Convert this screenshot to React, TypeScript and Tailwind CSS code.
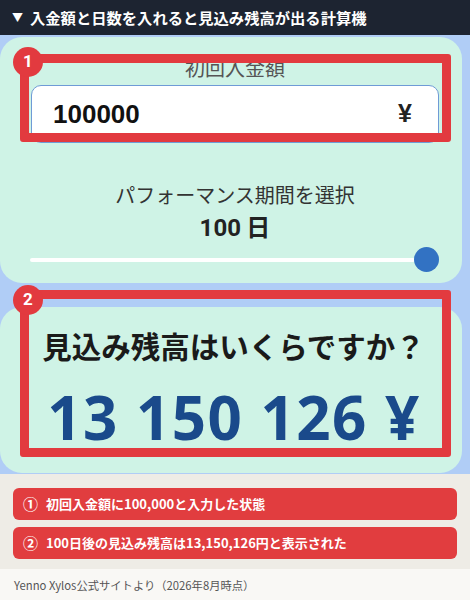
const jp = "font-['Noto_Sans_CJK_JP','Noto_Sans',sans-serif]";

function Badge({n, className}: {n: string, className: string}) {
    return (
        <div className={"absolute w-[30px] h-[30px] rounded-full bg-[#e23a3f] flex items-center justify-center text-white text-[17px] font-bold font-['Roboto',sans-serif] " + className}>
            {n}
        </div>
    );
}

export default function App() {
    return (
        <div className={"w-[470px] h-[600px] overflow-hidden bg-white " + jp}>
            <div className="h-[35px] bg-[#1d2431] flex items-center px-[12px] gap-[7px] text-white">
                <span className="text-[11px] leading-none">▼</span>
                <span className="text-[15.3px] font-bold leading-none">入金額と日数を入れると見込み残高が出る計算機</span>
            </div>

            <div className="relative bg-[#b0cdf6] pt-[2px] pb-[1px] pr-[8px]">
                <div className="w-[462px] h-[246px] bg-[#cff3e6] rounded-[22px] flex flex-col items-center pt-[18px] pl-[31px] pr-[23px]">
                    <div className="text-[20px] leading-[26px] text-[#555]">初回入金額</div>
                    <div className="mt-[4px] w-[408px] h-[58px] bg-white border-[1.5px] border-[#6f9bd6] rounded-[10px] flex items-center justify-between pl-[21px] pr-[26px]">
                        <span className="text-[26px] font-bold text-[#111] font-['Liberation_Sans',sans-serif]">100000</span>
                        <span className="text-[25px] font-bold text-[#222] font-['Liberation_Sans',sans-serif]">¥</span>
                    </div>
                    <div className="mt-[38px] text-[20px] leading-[28px] text-[#333]">パフォーマンス期間を選択</div>
                    <div className="mt-[2px] text-[24px] leading-[30px] font-bold text-[#222]">
                        <span className="font-['Roboto',sans-serif]">100</span> 日
                    </div>
                    <div className="mt-[4px] w-[409px] h-[25px] flex items-center -ml-[1px]">
                        <div className="flex-1 h-[4px] bg-white rounded-full"></div>
                        <div className="w-[25px] h-[25px] rounded-full bg-[#3272c3] -ml-[1px]"></div>
                    </div>
                </div>

                <div className="mt-[24px] w-[462px] h-[166px] bg-[#cff3e6] rounded-[22px] flex flex-col items-center pt-[18px]">
                    <div className="text-[29.5px] leading-[40px] font-bold text-[#1a1a1a] pl-[5px]">見込み残高はいくらですか？</div>
                    <div className="mt-[20px] text-[60px] leading-[64px] font-bold tracking-[1.5px] text-[#1a4a8b] font-['Open_Sans',sans-serif] pl-[6px]">13 150 126 ¥</div>
                </div>

                <div className="absolute left-[20px] top-[19px] w-[431px] h-[88px] border-[9px] border-[#e23a3f] rounded-[3px]"></div>
                <Badge n="1" className="left-[13px] top-[12px]" />
                <div className="absolute left-[20px] top-[255px] w-[431px] h-[167px] border-[9px] border-[#e23a3f] rounded-[3px]"></div>
                <Badge n="2" className="left-[13px] top-[250px]" />
            </div>

            <div className="bg-[#eeece6] pt-[14px] pb-[10px] px-[13px] flex flex-col gap-[7px]">
                <div className="h-[32px] bg-[#e13d3f] rounded-[6px] flex items-center px-[10px] gap-[8px] text-white text-[13px] font-bold">
                    <span className="text-[15px]">①</span>
                    <span>初回入金額に100,000と入力した状態</span>
                </div>
                <div className="h-[32px] bg-[#e13d3f] rounded-[6px] flex items-center px-[10px] gap-[8px] text-white text-[13px] font-bold">
                    <span className="text-[15px]">②</span>
                    <span>100日後の見込み残高は13,150,126円と表示された</span>
                </div>
            </div>

            <div className="h-[33px] bg-[#f9f8f5] flex items-center px-[14px] text-[11.3px] text-[#555]">
                Yenno Xylos公式サイトより（2026年8月時点）
            </div>
        </div>
    );
}
